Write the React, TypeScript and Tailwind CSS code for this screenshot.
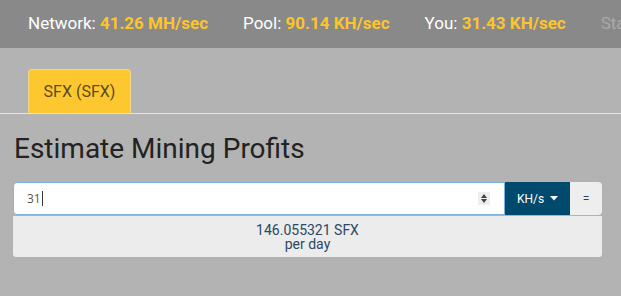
import React from "react";

export default function App() {
  return (
    <div className="w-[621px] h-[296px] bg-[#b3b3b3] overflow-hidden" style={{ fontFamily: "Roboto, 'Liberation Sans', sans-serif" }}>
      <div className="h-[48px] bg-[#898989] flex items-center pl-[28px] gap-[35px] text-[17px] whitespace-nowrap text-white">
        <span>Network: <b className="font-bold text-[#fcc42d]">41.26 MH/sec</b></span>
        <span>Pool: <b className="font-bold text-[#fcc42d]">90.14 KH/sec</b></span>
        <span>You: <b className="font-bold text-[#fcc42d]">31.43 KH/sec</b></span>
        <span className="text-[#a9a9a9]">Statistics</span>
      </div>
      <div className="pt-[21px] pl-[28px] flex items-end border-b border-[#e4e4e4]">
        <div className="w-[103px] h-[44px] bg-[#fdc82f] rounded-t-[4px] border border-b-0 border-[#f0d58a] flex items-center justify-center text-[16px] text-[#5a4a1e]">
          SFX (SFX)
        </div>
      </div>
      <div className="px-[13px] pr-[19px]">
        <h1 className="mt-[17px] text-[28px] leading-[36px] text-[#222] pl-[1px]">Estimate Mining Profits</h1>
        <div className="mt-[15px] flex h-[33px]">
          <div className="flex-1 bg-white border border-[#7fb2dc] rounded-l-[4px] flex items-center pl-[13px] pr-[14px]">
            <span className="text-[12px] text-[#555]" style={{ fontFamily: "'Open Sans', sans-serif" }}>31</span>
            <span className="w-[1px] h-[15px] bg-[#333] ml-[1px]" />
            <div className="flex-1" />
            <div className="w-[12px] h-[13px] bg-[#eee] flex flex-col items-center justify-center gap-[1px]">
              <svg width="6" height="4" viewBox="0 0 6 4"><path d="M0 4 L3 0 L6 4 Z" fill="#444" /></svg>
              <svg width="6" height="4" viewBox="0 0 6 4"><path d="M0 0 L3 4 L6 0 Z" fill="#444" /></svg>
            </div>
          </div>
          <div className="w-[65px] bg-[#004a6e] flex items-center justify-center gap-[6px] text-white text-[12px]">
            <span>KH/s</span>
            <svg width="8" height="5" viewBox="0 0 8 5"><path d="M0 0 L4 4.5 L8 0 Z" fill="#fff" /></svg>
          </div>
          <div className="w-[32px] bg-[#eeeeee] rounded-r-[4px] flex items-center justify-center text-[12px] text-[#2e3f52]">=</div>
        </div>
        <div className="mt-[1px] h-[41px] bg-[#ececec] rounded-b-[3px] flex flex-col items-center justify-center text-[14px] leading-[14px] text-[#2b4863]">
          <span>146.055321 SFX</span>
          <span>per day</span>
        </div>
      </div>
    </div>
  );
}
